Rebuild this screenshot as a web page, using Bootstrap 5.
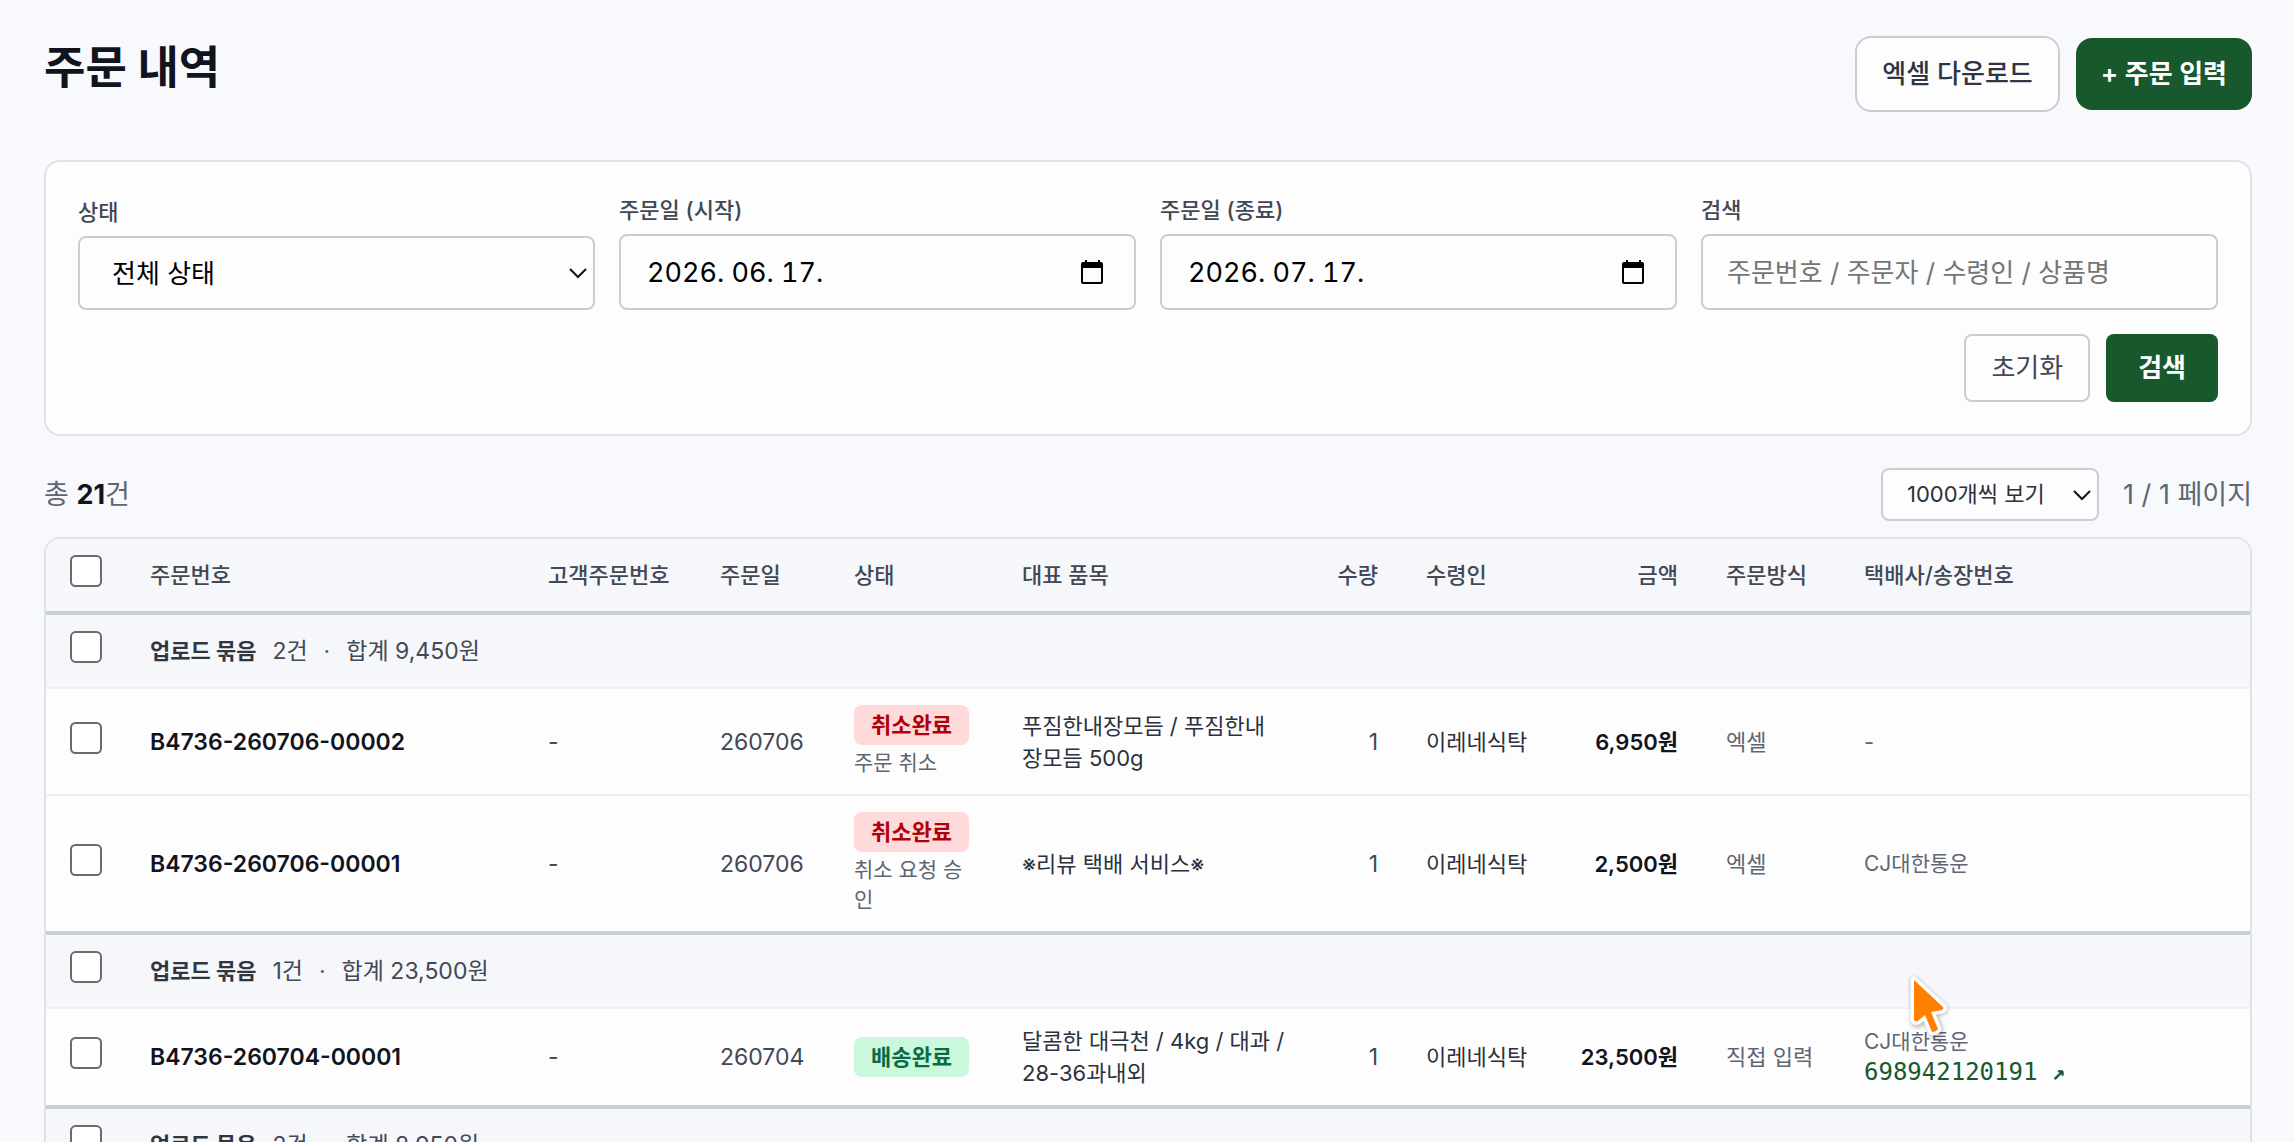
<!DOCTYPE html>
<html lang="ko">
<head>
<meta charset="utf-8">
<meta name="viewport" content="width=device-width, initial-scale=1">
<title>주문 내역</title>
<link rel="stylesheet" href="https://cdn.jsdelivr.net/npm/bootstrap@5.3.0/dist/css/bootstrap.min.css">
<style>
:root{--line:#dfe2e8;--field:#c9cdd6;--green:#17592d;--ink:#11141d;--slate:#424854;--muted:#5f6673}
body{background:#f7f9fd;font-family:Inter,"Noto Sans CJK KR",sans-serif;font-size:22px;line-height:32px;color:#2b313d}
.page-wrap{padding:36px 42px 0 44px}
.page-title{font-size:45px;line-height:64px;font-weight:700;color:var(--ink)}
.btn{--bs-btn-font-size:26px;--bs-btn-line-height:36px;--bs-btn-border-radius:8px;--bs-btn-padding-x:25px;--bs-btn-border-width:2px;--bs-btn-font-weight:500}
.btn-tall{--bs-btn-border-radius:16px;--bs-btn-padding-y:18px}
.btn-short{--bs-btn-padding-y:14px}
.btn-plain{--bs-btn-bg:#fdfdfe;--bs-btn-border-color:var(--field);--bs-btn-color:#2f3542}
.btn-quiet{--bs-btn-color:#424854;--bs-btn-font-weight:400}
.btn-green{--bs-btn-bg:var(--green);--bs-btn-color:#fff;--bs-btn-font-weight:600;--bs-btn-border-width:0}
.btn-green.btn-short{--bs-btn-padding-y:16px;--bs-btn-padding-x:32px}
.panel{background:#fdfdfe;border:2px solid var(--line);border-radius:16px}
.filter-panel{padding:32px}
.filter-grid{display:grid;grid-template-columns:repeat(4,1fr);gap:24px}
.filter-grid label{font-size:22px;line-height:32px;font-weight:500;color:var(--slate);margin-bottom:8px}
.form-control,.form-select{height:76px;font-size:26px;border:2px solid var(--field);border-radius:8px;padding:0 24px;background-color:#fdfdfe;color:#000}
.form-control::placeholder{color:#757575}
.date-box{font-size:27px;font-variant-numeric:tabular-nums;padding-left:26px}
.form-select{height:74px;padding:0 48px 0 32px;background-image:url("data:image/svg+xml,%3Csvg xmlns='http://www.w3.org/2000/svg' viewBox='0 0 20 12'%3E%3Cpath d='M2 2l8 8 8-8' fill='none' stroke='%23111' stroke-width='2'/%3E%3C/svg%3E");background-size:20px 12px;background-position:right 5px center}
.select-page{width:218px;height:53px;font-size:22px;padding:0 24px;color:#2b313d}
.date-btn{position:absolute;right:29px;top:50%;transform:translateY(-50%);border:0;background:none;padding:0;line-height:0}
.summary{font-size:27px;color:var(--muted);margin:32px 0 16px}
.summary strong{color:var(--ink)}
.order-table{width:100%;table-layout:fixed;border-collapse:separate;border-spacing:0}
.order-table th,.order-table td{padding:16px 24px;vertical-align:middle}
.order-table thead th{background:#f6f7fb;font-weight:500;color:var(--slate);height:72px;padding-top:0;padding-bottom:0}
.order-table tbody td{border-bottom:2px solid #eef0f3}
.order-table tr.row-last td{border-bottom:0}
.order-table tr.row-group td{background:#f6f7fb;border-top:4px solid var(--field);height:78px;padding-top:0;padding-bottom:0;font-size:23px;color:var(--slate)}
.col-check{width:80px}.col-no{width:398px}.col-cust{width:172px}.col-date{width:134px}.col-state{width:168px}.col-item{width:316px}.col-qty{width:88px}.col-to{width:153px}.col-sum{width:147px}.col-way{width:138px}
.form-check-input{display:block;width:32px;height:32px;margin:0 0 8px;border:2px solid #6b6b6e;border-radius:5px;background-color:#fff}
.order-table .group-name{font-size:22px;font-weight:700;color:#2f3542}
.order-no{font-size:23px;font-weight:600;color:var(--ink)}
.digits{font-size:23px;color:var(--slate)}
.amount{font-weight:600;color:var(--ink)}
.soft{color:var(--muted)}
.pill{display:block;width:max-content;padding:0 17px;line-height:40px;border-radius:8px;font-weight:600}
.pill-red{background:#fedada;color:#b00009}
.pill-green{background:#c9f8dc;color:#0b6b45}
.state-note{font-size:21px;line-height:30px;margin-top:3px;color:var(--muted);word-break:break-all}
.carrier{font-size:21px;line-height:30px;color:var(--muted)}
.track-link{display:block;font-family:"DejaVu Sans Mono",monospace;font-size:24px;line-height:30px;color:var(--green);text-decoration:none}
.track-link span{font-size:22px;font-weight:700}
.pointer{position:absolute;left:44px;top:-56px}
</style>
</head>
<body class="vh-100 overflow-hidden">
<main class="page-wrap">
  <header class="d-flex justify-content-between align-items-start mb-5">
    <h1 class="page-title mb-0">주문 내역</h1>
    <div class="d-flex align-items-center gap-3">
      <button type="button" class="btn btn-plain btn-tall">엑셀 다운로드</button>
      <button type="button" class="btn btn-green btn-tall">+ 주문 입력</button>
    </div>
  </header>

  <form class="panel filter-panel">
    <div class="filter-grid align-items-end">
      <div><label class="d-block" for="f-state">상태</label>
        <select id="f-state" class="form-select"><option>전체 상태</option></select></div>
      <div><label class="d-block" for="f-from">주문일 (시작)</label>
        <div class="position-relative"><input id="f-from" type="text" class="form-control date-box" value="2026. 06. 17.">
          <button type="button" class="date-btn" aria-label="시작일 선택"><svg width="26" height="26" viewBox="0 0 26 26"><path fill-rule="evenodd" d="M4 1h2v2h11V1h2v2h1a2 2 0 0 1 2 2v18a2 2 0 0 1-2 2H2a2 2 0 0 1-2-2V5a2 2 0 0 1 2-2h2zM2 9v14h18V9z"/></svg></button></div></div>
      <div><label class="d-block" for="f-to">주문일 (종료)</label>
        <div class="position-relative"><input id="f-to" type="text" class="form-control date-box" value="2026. 07. 17.">
          <button type="button" class="date-btn" aria-label="종료일 선택"><svg width="26" height="26" viewBox="0 0 26 26"><path fill-rule="evenodd" d="M4 1h2v2h11V1h2v2h1a2 2 0 0 1 2 2v18a2 2 0 0 1-2 2H2a2 2 0 0 1-2-2V5a2 2 0 0 1 2-2h2zM2 9v14h18V9z"/></svg></button></div></div>
      <div><label class="d-block" for="f-q">검색</label>
        <input id="f-q" type="text" class="form-control" placeholder="주문번호 / 주문자 / 수령인 / 상품명"></div>
    </div>
    <div class="d-flex justify-content-end gap-3 mt-4">
      <button type="reset" class="btn btn-plain btn-quiet btn-short">초기화</button>
      <button type="submit" class="btn btn-green btn-short">검색</button>
    </div>
  </form>

  <div class="summary d-flex justify-content-between align-items-center">
    <div>총 <strong>21</strong>건</div>
    <div class="d-flex align-items-center gap-4">
      <select class="form-select select-page" aria-label="페이지당 개수"><option>1000개씩 보기</option></select>
      <span>1 / 1 페이지</span>
    </div>
  </div>

  <div class="panel overflow-hidden">
    <table class="order-table">
      <colgroup><col class="col-check"><col class="col-no"><col class="col-cust"><col class="col-date"><col class="col-state"><col class="col-item"><col class="col-qty"><col class="col-to"><col class="col-sum"><col class="col-way"><col></colgroup>
      <thead>
        <tr>
          <th><input class="form-check-input" type="checkbox" aria-label="전체 선택"></th>
          <th>주문번호</th><th class="text-nowrap">고객주문번호</th><th>주문일</th><th>상태</th><th>대표 품목</th><th class="text-end px-0 pe-4">수량</th><th>수령인</th><th class="text-end">금액</th><th class="text-nowrap">주문방식</th><th>택배사/송장번호</th>
        </tr>
      </thead>
      <tbody>
        <tr class="row-group">
          <td><input class="form-check-input" type="checkbox" aria-label="묶음 선택"></td>
          <td colspan="10"><div class="d-flex gap-3"><span class="group-name">업로드 묶음</span><span>2건</span><span class="soft">·</span><span>합계 9,450원</span></div></td>
        </tr>
        <tr>
          <td><input class="form-check-input" type="checkbox" aria-label="주문 선택"></td>
          <td class="order-no">B4736-260706-00002</td><td class="digits">-</td><td class="digits">260706</td>
          <td><span class="pill pill-red">취소완료</span><div class="state-note">주문 취소</div></td>
          <td>푸짐한내장모듬 / 푸짐한내<br>장모듬 500g</td>
          <td class="digits text-end">1</td><td class="text-nowrap">이레네식탁</td><td class="amount text-end text-nowrap">6,950원</td><td class="soft">엑셀</td><td class="soft">-</td>
        </tr>
        <tr class="row-last">
          <td><input class="form-check-input" type="checkbox" aria-label="주문 선택"></td>
          <td class="order-no">B4736-260706-00001</td><td class="digits">-</td><td class="digits">260706</td>
          <td><span class="pill pill-red">취소완료</span><div class="state-note">취소 요청 승인</div></td>
          <td>※리뷰 택배 서비스※</td>
          <td class="digits text-end">1</td><td class="text-nowrap">이레네식탁</td><td class="amount text-end text-nowrap">2,500원</td><td class="soft">엑셀</td><td><div class="carrier">CJ대한통운</div></td>
        </tr>
        <tr class="row-group">
          <td><input class="form-check-input" type="checkbox" aria-label="묶음 선택"></td>
          <td colspan="10"><div class="d-flex gap-3"><span class="group-name">업로드 묶음</span><span>1건</span><span class="soft">·</span><span>합계 23,500원</span></div></td>
        </tr>
        <tr class="row-last">
          <td><input class="form-check-input" type="checkbox" aria-label="주문 선택"></td>
          <td class="order-no">B4736-260704-00001</td><td class="digits">-</td><td class="digits">260704</td>
          <td><span class="pill pill-green">배송완료</span></td>
          <td>달콤한 대극천 / 4kg / 대과 / 28-36과내외</td>
          <td class="digits text-end">1</td><td class="text-nowrap">이레네식탁</td><td class="amount text-end text-nowrap">23,500원</td><td class="soft text-nowrap">직접 입력</td>
          <td><div class="position-relative"><div class="carrier">CJ대한통운</div><a class="track-link" href="#">698942120191 <span>↗</span></a>
            <svg class="pointer" width="46" height="72" viewBox="0 0 46 72" aria-hidden="true"><g stroke-linejoin="round"><path d="M6 10L35 38q1 2-1 2l-10 1 7 18q0 4-5 4l-8-17-7 6q-3 1-4-1z" fill="none" stroke="#0004" stroke-width="8" style="filter:blur(2px)"/><path d="M6 9v40q1 2 4 1l7-6 7 17q4 0 6-3l-7-17 11-2q2-1 1-3z" fill="#ff8000" stroke="#fff" stroke-width="7" paint-order="stroke"/></g></svg></div></td>
        </tr>
        <tr class="row-group">
          <td><input class="form-check-input" type="checkbox" aria-label="묶음 선택"></td>
          <td colspan="10"><div class="d-flex gap-3"><span class="group-name">업로드 묶음</span><span>2건</span><span class="soft">·</span><span>합계 8,950원</span></div></td>
        </tr>
      </tbody>
    </table>
  </div>
</main>
<script src="https://cdn.jsdelivr.net/npm/bootstrap@5.3.0/dist/js/bootstrap.bundle.min.js"></script>
</body>
</html>
